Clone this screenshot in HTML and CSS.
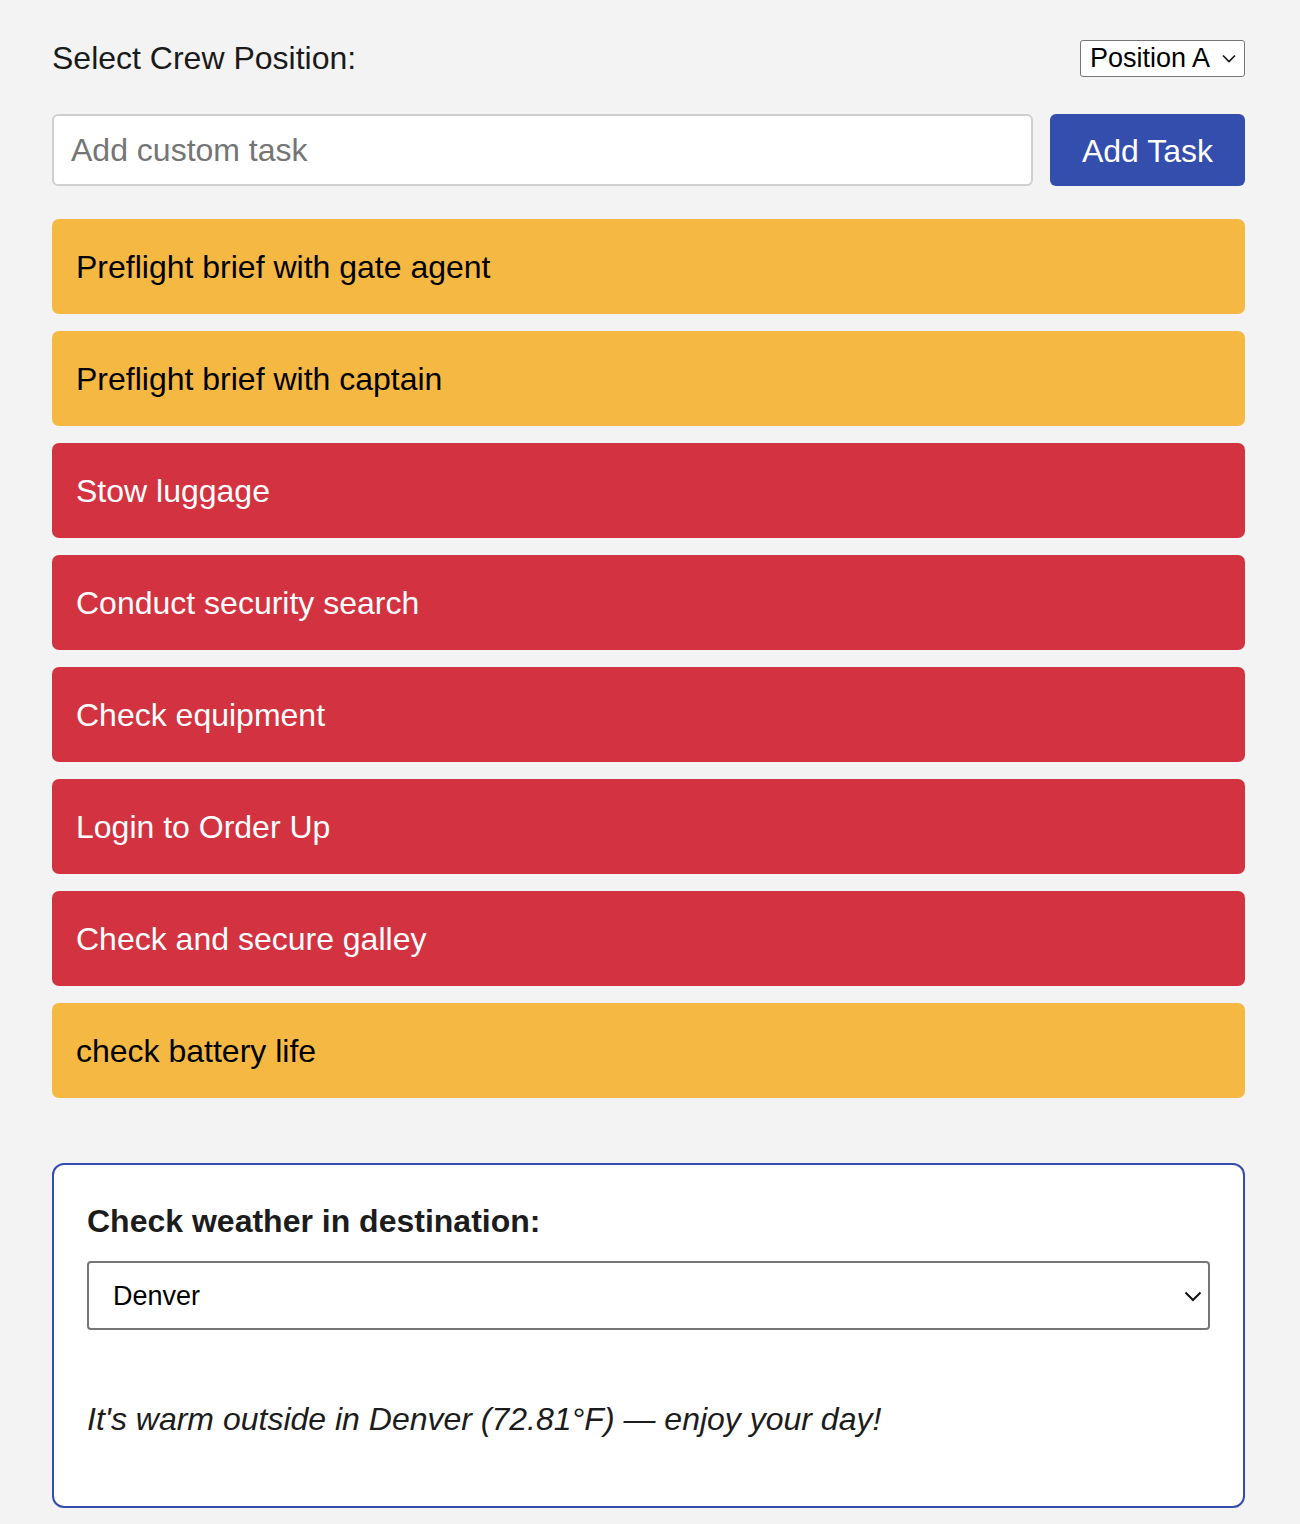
FILE: index.html
```html
<!DOCTYPE html>
<html lang="en">
<head>
<meta charset="utf-8">
<title>Crew Tasks</title>
<link rel="stylesheet" href="styles.css">
</head>
<body>
<div class="app">
  <div class="header">
    <label class="header-label" for="pos">Select Crew Position:</label>
    <div class="pos-select">
      <span>Position A</span>
      <svg class="chev-sm" viewBox="0 0 14 9" width="14" height="9"><path d="M1 1.5 L7 7.5 L13 1.5" fill="none" stroke="#111" stroke-width="1.6"/></svg>
    </div>
  </div>
  <div class="add-row">
    <div class="task-input">Add custom task</div>
    <div class="add-btn">Add Task</div>
  </div>
  <div class="tasks">
    <div class="task pending">Preflight brief with gate agent</div>
    <div class="task pending">Preflight brief with captain</div>
    <div class="task urgent">Stow luggage</div>
    <div class="task urgent">Conduct security search</div>
    <div class="task urgent">Check equipment</div>
    <div class="task urgent">Login to Order Up</div>
    <div class="task urgent">Check and secure galley</div>
    <div class="task pending">check battery life</div>
  </div>
  <div class="weather">
    <h2 class="weather-title">Check weather in destination:</h2>
    <div class="city-select">
      <span>Denver</span>
      <svg class="chev" viewBox="0 0 18 11" width="18" height="11"><path d="M1.5 1.5 L9 9 L16.5 1.5" fill="none" stroke="#111" stroke-width="2"/></svg>
    </div>
    <p class="weather-msg">It's warm outside in Denver (72.81°F) — enjoy your day!</p>
  </div>
</div>
</body>
</html>
```
FILE: styles.css
```css
html, body {
  margin: 0;
  padding: 0;
  background: #f3f3f3;
}
body {
  font-family: "Liberation Sans", Arial, Helvetica, sans-serif;
  color: #1a1a1a;
}
.app {
  width: 1193px;
  margin-left: 52px;
  padding-top: 40px;
  padding-bottom: 16px;
}
.header {
  display: flex;
  justify-content: space-between;
  align-items: center;
  height: 37px;
}
.header-label {
  font-size: 32px;
  color: #1a1a1a;
  line-height: 37px;
}
.pos-select {
  box-sizing: border-box;
  height: 37px;
  width: 165px;
  border: 1.5px solid #767676;
  border-radius: 3px;
  background: #fff;
  display: flex;
  align-items: center;
  justify-content: space-between;
  padding: 0 8px 0 9px;
  font-size: 27px;
  color: #000;
}
.add-row {
  display: flex;
  gap: 17px;
  margin-top: 37px;
}
.task-input {
  flex: 1;
  box-sizing: border-box;
  height: 72px;
  background: #fff;
  border: 2px solid #cfcfcf;
  border-radius: 6px;
  padding: 1px 17px 0;
  display: flex;
  align-items: center;
  font-size: 32px;
  color: #757575;
}
.add-btn {
  width: 195px;
  height: 72px;
  box-sizing: border-box;
  background: #344ead;
  color: #fff;
  border-radius: 6px;
  display: flex;
  align-items: center;
  justify-content: center;
  padding-top: 2px;
  font-size: 32px;
}
.tasks {
  display: flex;
  flex-direction: column;
  gap: 17px;
  margin-top: 33px;
}
.task {
  height: 95px;
  box-sizing: border-box;
  border-radius: 7px;
  padding: 2px 24px 0;
  display: flex;
  align-items: center;
  font-size: 32px;
}
.pending {
  background: #f5b843;
  color: #000;
}
.urgent {
  background: #d33340;
  color: #fff;
}
.weather {
  margin-top: 65px;
  box-sizing: border-box;
  height: 345px;
  background: #fff;
  border: 2px solid #344ead;
  border-radius: 12px;
  padding: 0 33px;
}
.weather-title {
  margin: 38px 0 0;
  font-size: 32px;
  font-weight: bold;
  color: #1c1c1c;
  line-height: 36px;
}
.city-select {
  margin-top: 22px;
  box-sizing: border-box;
  height: 69px;
  border: 2px solid #767676;
  border-radius: 4px;
  display: flex;
  align-items: center;
  justify-content: space-between;
  padding: 2px 6px 0 24px;
  font-size: 27px;
  color: #000;
}
.weather-msg {
  margin: 71px 0 0;
  font-size: 32px;
  font-style: italic;
  color: #1c1c1c;
  line-height: 36px;
}
```
